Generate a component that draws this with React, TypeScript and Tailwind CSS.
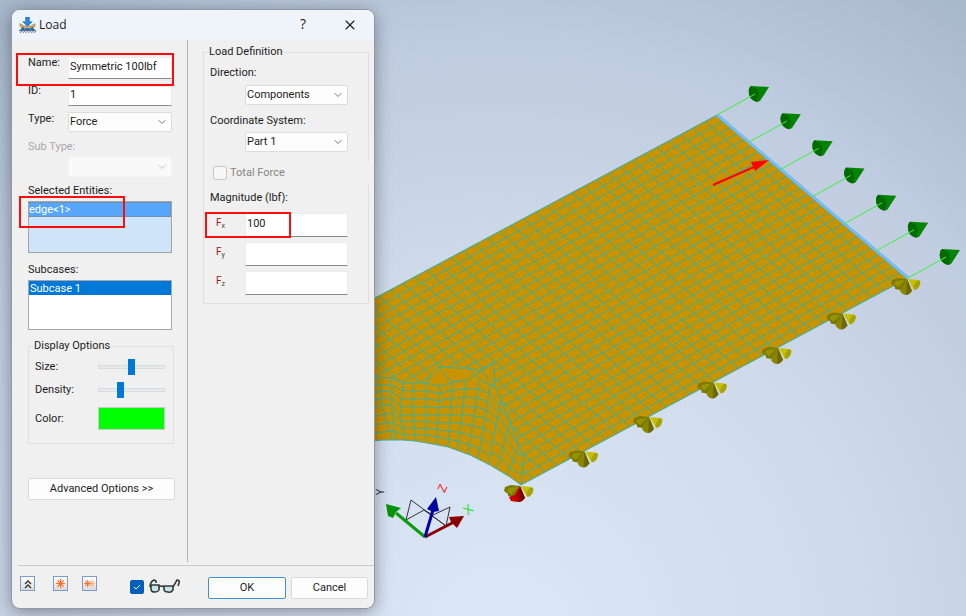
import { useState } from "react";
import type { ReactNode } from "react";
import { ChevronDown, X } from "lucide-react";

type Point = [number, number];

const toPoints = (points: Point[]) => points.map((p) => p.join(",")).join(" ");

/* Boundary between the regular mesh and the mesh that wraps the fillet */
const SEAM: Point[] = [
  [360, 377], [391, 378], [403, 383], [426, 383], [438, 367], [455, 368], [468, 368],
  [481, 371], [493, 363], [495, 387], [502, 402], [510, 422], [519, 446], [524, 456], [521, 485],
];

const FILLET: Point[] = [
  [521, 485], [510, 477], [500, 471], [490, 465], [480, 460], [470, 455], [459, 451], [448, 447],
  [438, 445], [427, 443], [415, 441], [403, 440], [383, 440], [360, 442],
];

/* Fillet mesh columns, each running from the seam down to the fillet edge */
const COLUMNS: Point[][] = [
  [[366, 378], [368, 410], [374, 441]],
  [[379, 378], [382, 405], [392, 440]],
  [[391, 378], [391, 405], [396, 440]],
  [[403, 382], [400, 415], [405, 441]],
  [[413, 383], [413, 415], [415, 441]],
  [[426, 383], [426, 415], [426, 442]],
  [[440, 386], [438, 415], [437, 444]],
  [[452, 382], [450, 415], [448, 447]],
  [[466, 381], [462, 414], [458, 451]],
  [[480, 380], [474, 416], [468, 455]],
  [[490, 385], [485, 418], [478, 459]],
  [[501, 400], [496, 425], [488, 465]],
];

const onColumn = (column: Point[], t: number): Point => {
  const [a, b, c] = column;
  const [from, to, s] = t < 0.5 ? [a, b, t * 2] : [b, c, t * 2 - 1];
  return [from[0] + (to[0] - from[0]) * s, from[1] + (to[1] - from[1]) * s];
};

const TRANSITION: Point[][] = [
  [[426, 383], [440, 386], [458, 381]],
  [[438, 367], [452, 382]],
  [[468, 368], [480, 380], [490, 385], [495, 387]],
  [[481, 371], [466, 381], [452, 382]],
  [[481, 371], [495, 387]],
  [[510, 422], [503, 447], [497, 469]],
  [[519, 446], [512, 463], [506, 475]],
  [[500, 408], [510, 422]],
  [[498, 417], [508, 430], [519, 446]],
  [[496, 426], [506, 438], [516, 453], [524, 456]],
  [[493, 440], [503, 447], [513, 461], [523, 466]],
  [[491, 452], [500, 458], [510, 468], [522, 475]],
];

const range = (n: number) => Array.from({ length: n }, (_, i) => i);

function Mesh() {
  return (
    <g>
      <defs>
        <clipPath id="regular">
          <polygon points={toPoints([[360, 306], [717, 115], [908, 278], [521, 485], ...[...SEAM].reverse()])} />
        </clipPath>
      </defs>
      <polygon
        points={toPoints([[360, 306], [717, 115], [908, 278], ...FILLET])}
        fill="#c79300"
        stroke="#43ada0"
      />
      <g stroke="#39b0a2" strokeWidth="1" fill="none">
        <g clipPath="url(#regular)">
          {range(28).map((i) => {
            const x = 717 + (191 * i) / 27;
            const y = 115 + (163 * i) / 27;
            return <line key={i} x1={x} y1={y} x2={x - 580.5} y2={y + 310.5} />;
          })}
          {range(46).map((i) => {
            const x = 717 - (387 * i) / 32;
            const y = 115 + (207 * i) / 32;
            return <line key={i} x1={x} y1={y} x2={x + 191} y2={y + 163} />;
          })}
        </g>
        <polyline points={toPoints(SEAM)} />
        {COLUMNS.map((column, i) => (
          <polyline key={i} points={toPoints(column)} />
        ))}
        {range(7).map((i) => (
          <polyline key={i} points={toPoints(COLUMNS.map((c) => onColumn(c, (i + 1) / 8)))} />
        ))}
        {TRANSITION.map((line, i) => (
          <polyline key={i} points={toPoints(line)} />
        ))}
      </g>
      <line x1="717" y1="115" x2="908" y2="278" stroke="#5db4f5" strokeWidth="3" />
      <line x1="717" y1="115" x2="908" y2="278" stroke="#8fccf8" />
    </g>
  );
}

function ForceArrow({ x, y }: { x: number; y: number }) {
  return (
    <g transform={`translate(${x} ${y})`}>
      <path d="M52-28 34-29Q31-27 32-21 33-15 40-13L43-14Z" fill="#048404" />
      <path d="M34-29Q31-27 32-21 33-15 40-13L42-20 40-26Z" fill="#036a03" />
      <path d="M0 0 38-21" stroke="#3cf03c" fill="none" />
    </g>
  );
}

function Constraint({ x, y, pinned }: { x: number; y: number; pinned?: boolean }) {
  return (
    <g transform={`translate(${x} ${y})`}>
      <path d="M0 1-9 0-15 2-16 6-12 9-12 11-7 12-3 10Z" fill="#7d7a00" />
      <path d="M-2 2-11 3-13 6-9 9Z" fill="#989400" />
      <path d="M1 1 11 2 13 5 12 9 7 12Z" fill="#c5c000" />
      <ellipse cx="10" cy="7" rx="2.5" ry="5" transform="rotate(28 10 7)" fill="#a8a300" />
      <path d="M0 1-7 13Q-3 19 2 16L5 13Z" fill={pinned ? "#b80000" : "#8a8600"} />
      <path d="M0 1-1 17 2 16 5 13Z" fill={pinned ? "#7c0000" : "#6d6900"} />
      {pinned && <path d="M-11 12-6 10-3 17-9 16Z" fill="#d00000" />}
    </g>
  );
}

function Triad() {
  return (
    <g>
      <path
        d="M406 520 411 500 446 526 450 507 433 515M406 520 424 510 446 526M424 510 433 515"
        stroke="#333"
        fill="none"
      />
      <path d="M425 537 396 513" stroke="#0a9c0a" strokeWidth="3" />
      <path d="M386 504 401 508 396 512 393 518 388 516Z" fill="#079307" />
      <path d="M425 537 454 522" stroke="#8b0000" strokeWidth="3" />
      <path d="M464 516 449 517 451 522 457 528Z" fill="#8b0000" />
      <path d="M425 537 433 510" stroke="#0000a8" strokeWidth="3" />
      <path d="M436 497 427 509 433 512 439 511Z" fill="#0000a0" />
      <g fontFamily="'Liberation Sans', Arial, sans-serif" textAnchor="middle">
        <text transform="translate(384 492) rotate(-90)" fontSize="10" fill="#222">Y</text>
        <text transform="translate(446 490) rotate(-65)" fontSize="12" fill="#f22">Z</text>
        <text transform="translate(471 513) rotate(-40)" fontSize="13" fill="#2be02b">X</text>
      </g>
    </g>
  );
}

function Viewport() {
  return (
    <svg
      className="absolute inset-0 h-full w-full"
      viewBox="0 0 966 616"
      preserveAspectRatio="xMinYMin slice"
      aria-label="Model view"
    >
      <defs>
        <radialGradient id="sky" gradientUnits="userSpaceOnUse" cx="500" cy="640" r="800">
          <stop offset="0" stopColor="#dce7f7" />
          <stop offset="0.45" stopColor="#cfdaea" />
          <stop offset="0.74" stopColor="#c0ccdf" />
          <stop offset="1" stopColor="#a6b6cb" />
        </radialGradient>
      </defs>
      <rect width="966" height="616" fill="url(#sky)" />
      <Mesh />
      {range(7).map((i) => (
        <ForceArrow key={i} x={717 + (191 * i) / 6} y={115 + (163 * i) / 6} />
      ))}
      {range(7).map((i) => (
        <Constraint key={i} x={907 - (387 * i) / 6} y={278 + (207 * i) / 6} pinned={i === 6} />
      ))}
      <path d="M713 185 754 167" stroke="#f00" strokeWidth="2" />
      <path d="M769 160 751 162 755 171Z" fill="#f00" />
      <Triad />
    </svg>
  );
}

function Highlight({ className }: { className: string }) {
  return <div className={`pointer-events-none absolute border-2 border-[#fb0d0d] ${className}`} />;
}

function TextBox({ id, value, className }: { id: string; value?: string; className: string }) {
  return (
    <input
      id={id}
      defaultValue={value}
      className={`block w-full border border-[#ececec] border-b-[#8a8a8a] bg-white px-px outline-none ${className}`}
    />
  );
}

function DropDown({ id, value, disabled }: { id: string; value: string; disabled?: boolean }) {
  return (
    <div className="relative">
      <select
        id={id}
        disabled={disabled}
        className="block h-5 w-full appearance-none rounded-xs border border-[#dcdcdc] bg-[#fdfdfd] px-px outline-none disabled:border-[#f5f5f5] disabled:bg-[#f9f9f9]"
      >
        <option>{value}</option>
      </select>
      <ChevronDown
        strokeWidth={2}
        className={`pointer-events-none absolute top-1 right-1 size-3 ${disabled ? "text-[#c4c4c4]" : "text-[#777]"}`}
      />
    </div>
  );
}

function Slider({ id, value }: { id: string; value: number }) {
  return (
    <input
      id={id}
      type="range"
      defaultValue={value}
      className="h-4 w-[67px] appearance-none bg-transparent [&::-webkit-slider-runnable-track]:h-1 [&::-webkit-slider-runnable-track]:border [&::-webkit-slider-runnable-track]:border-[#d9dcdc] [&::-webkit-slider-runnable-track]:bg-[#e7eaea] [&::-webkit-slider-thumb]:-mt-[7px] [&::-webkit-slider-thumb]:h-4 [&::-webkit-slider-thumb]:w-[7px] [&::-webkit-slider-thumb]:appearance-none [&::-webkit-slider-thumb]:bg-[#0078d7]"
    />
  );
}

function ListBox({ label, className, children }: { label: string; className: string; children: ReactNode }) {
  return (
    <ul role="listbox" aria-label={label} className={`border border-[#a3a7ad] ${className}`}>
      {children}
    </ul>
  );
}

function ToolButton({ label, children }: { label: string; children: ReactNode }) {
  return (
    <button
      aria-label={label}
      className="grid size-[15px] place-items-center border border-[#7c9bd3] bg-linear-to-b from-white to-[#dcdad5]"
    >
      {children}
    </button>
  );
}

const STAR = "M5 0V10M0 5H10M1.5 1.5 8.5 8.5M8.5 1.5 1.5 8.5";

function LoadIcon() {
  return (
    <svg viewBox="0 0 18 18" className="size-[17px]" aria-hidden="true">
      <path d="M1 7Q9 13 17 7V10Q9 15 1 10Z" fill="#d9ad62" stroke="#8c6a35" strokeWidth=".5" />
      <path d="M1 14 4 10 7 14ZM11 14 14 10 17 14ZM6 14H12V12H6Z" fill="#1d68b8" />
      <path d="M7 0H11V5H14L9 10 4 5H7Z" fill="#2d86dc" stroke="#1761aa" strokeWidth=".6" />
      <path d="M0 14.5H18" stroke="#3e5266" />
      <path d="M1 17 3 15M4 17 6 15M7 17 9 15M10 17 12 15M13 17 15 15M16 17 18 15" stroke="#5d7185" />
    </svg>
  );
}

function GlassesIcon() {
  return (
    <svg viewBox="0 0 31 16" className="h-4 w-[31px]" fill="none" stroke="#333a3a" strokeWidth="1.6" aria-hidden="true">
      <path d="M2 6H10V11Q9 13 6 13 2 13 2 10ZM15 7H24V11Q22 14 19 13 15 13 15 10Z" fill="#c5e3e8" />
      <path d="M10 8Q12 6 15 8M1 8Q1 3 5 1L7 2V4M24 8 28 1Q31 1 30 4L29 7" />
    </svg>
  );
}

const COMPONENTS = [
  { axis: "x", value: "100" },
  { axis: "y", value: "" },
  { axis: "z", value: "" },
];

function Properties() {
  return (
    <section className="border-r border-[#b4b4b4] pt-[9px] pr-3 pl-4">
      <div className="relative grid grid-cols-[40px_1fr]">
        <div className="flex flex-col leading-7 whitespace-nowrap">
          <label htmlFor="name">Name:</label>
          <label htmlFor="id">ID:</label>
          <label htmlFor="type">Type:</label>
          <label htmlFor="subtype" className="text-[#a9a9a9]">Sub Type:</label>
        </div>
        <div className="pt-2 pr-[3px]">
          <TextBox id="name" value="Symmetric 100lbf" className="h-[22px] pb-1" />
          <div className="h-[7px]" />
          <TextBox id="id" value="1" className="h-5 pb-1" />
          <div className="h-[6px]" />
          <DropDown id="type" value="Force" />
          <div className="h-[25px]" />
          <DropDown id="subtype" value="" disabled />
        </div>
        <Highlight className="top-1 right-[1px] -left-3 h-[33px]" />
      </div>

      <div className="relative mt-1 pr-[3px]">
        <h2 className="leading-5">Selected Entities:</h2>
        <ListBox label="Selected Entities" className="h-[52px] bg-[#cee4f8]">
          <li role="option" aria-selected="true" className="h-[15px] border border-l-0 border-dotted border-[#8a7a60] bg-[#56a6fb] leading-[14px] text-white">
            edge&lt;1&gt;
          </li>
        </ListBox>
        <Highlight className="top-[15px] -left-[9px] h-8 w-[106px]" />
      </div>

      <div className="mt-[7px] pr-[3px]">
        <h2 className="leading-5">Subcases:</h2>
        <ListBox label="Subcases" className="h-[50px] bg-white">
          <li role="option" aria-selected="true" className="h-[14px] bg-[#0078d7] pl-px leading-[16px] text-white">
            Subcase 1
          </li>
        </ListBox>
      </div>

      <fieldset className="mt-2 mr-[1px] border border-[#dfdfdf] pr-2 pb-[13px] pl-[6px]">
        <legend className="-ml-[2px] px-px leading-4">Display Options</legend>
        <div className="flex items-center justify-between pt-[5px] leading-4">
          <label htmlFor="size">Size:</label>
          <Slider id="size" value={50} />
        </div>
        <div className="flex items-center justify-between pt-[7px] leading-4">
          <label htmlFor="density">Density:</label>
          <Slider id="density" value={31} />
        </div>
        <div className="flex items-center justify-between pt-[9px] leading-4">
          <span>Color:</span>
          <button aria-label="Color" className="h-[23px] w-[67px] border border-[#c9c9c9] bg-[#00ff00]" />
        </div>
      </fieldset>

      <button className="mt-[34px] block h-[22px] w-full rounded-xs border border-[#dadada] bg-[#fdfdfd]">
        Advanced Options &gt;&gt;
      </button>
    </section>
  );
}

function Definition() {
  return (
    <section className="pt-1 pr-[5px] pl-[15px]">
      <fieldset className="border border-[#dfdfdf] pb-2 pl-[6px]">
        <legend className="-ml-[2px] px-px leading-4">Load Definition</legend>
        <label htmlFor="direction" className="block pt-[5px] leading-4">Direction:</label>
        <div className="mt-1 mr-5 ml-[35px]">
          <DropDown id="direction" value="Components" />
        </div>
        <label htmlFor="system" className="mt-2 block leading-4">Coordinate System:</label>
        <div className="mt-[3px] mr-5 ml-[35px]">
          <DropDown id="system" value="Part 1" />
        </div>
        <label className="mt-[9px] -mr-px flex h-6 items-center gap-[3px] bg-[#f0f0f0] pl-[3px] text-[#858585]">
          <input type="checkbox" disabled className="size-[14px] appearance-none rounded-xs border border-[#c8c8c8] bg-[#f7f7f7]" />
          Total Force
        </label>
        <h2 className="mt-[5px] leading-4">Magnitude (lbf):</h2>
        <div className="relative mt-[7px] flex flex-col gap-[5px]">
          {COMPONENTS.map(({ axis, value }) => (
            <div key={axis} className="grid grid-cols-[35px_1fr] pr-5">
              <label htmlFor={axis} className="pl-[6px] text-[10px] leading-5 text-[#a31515]">
                F<sub className="text-[7px] text-[#444]">{axis}</sub>
              </label>
              <TextBox id={axis} value={value} className="h-6 pb-1" />
            </div>
          ))}
          <Highlight className="-top-px -left-[5px] h-[26px] w-[86px]" />
        </div>
      </fieldset>
    </section>
  );
}

function Footer() {
  const [preview, setPreview] = useState(true);
  return (
    <footer className="ml-[6px] flex h-[43px] items-start border-t border-[#c9c9c9] pt-[10px] pr-[6px]">
      <div className="flex pl-[2px]">
        <ToolButton label="Collapse">
          <svg viewBox="0 0 10 10" className="size-[10px]" fill="none" stroke="#333" strokeWidth="1.3">
            <path d="M2 5 5 2 8 5M2 9 5 6 8 9" />
          </svg>
        </ToolButton>
        <div className="ml-[18px] flex gap-[14px]">
          <ToolButton label="Show load">
            <svg viewBox="0 0 10 10" className="size-[9px]" stroke="#ff6a1f" strokeWidth="1.3">
              <path d={STAR} />
            </svg>
          </ToolButton>
          <ToolButton label="Show all loads">
            <svg viewBox="0 0 16 10" className="h-[7px] w-[11px]" strokeWidth="1.3">
              <path d={STAR} stroke="#ffb070" transform="translate(6 0)" />
              <path d={STAR} stroke="#ff6a1f" />
            </svg>
          </ToolButton>
        </div>
      </div>
      <label className="ml-[33px] flex items-center gap-[5px] pt-[3px]">
        <span className="relative block size-[14px]">
          <input
            type="checkbox"
            aria-label="Preview"
            checked={preview}
            onChange={() => setPreview(!preview)}
            className="block size-[14px] appearance-none rounded-xs border border-[#005fb8] checked:bg-[#005fb8]"
          />
          <svg viewBox="0 0 14 14" className="pointer-events-none absolute inset-0" fill="none" stroke="#fff">
            <path d="M4 7 6 9 10 5" />
          </svg>
        </span>
        <GlassesIcon />
      </label>
      <div className="ml-auto flex gap-[5px] pt-px">
        <button className="h-[22px] w-[78px] rounded-xs border border-[#3f92d8] bg-[#fdfdfd]">OK</button>
        <button className="h-[22px] w-[77px] rounded-xs border border-[#dadada] bg-[#fdfdfd]">Cancel</button>
      </div>
    </footer>
  );
}

export default function App() {
  return (
    <main className="relative min-h-screen overflow-hidden bg-[#c0ccdf] pt-[10px] pb-2 pl-3 font-[Roboto,sans-serif] text-[11px] text-[#1c1c1c]">
      <Viewport />
      <div
        role="dialog"
        aria-labelledby="title"
        className="relative w-[362px] overflow-hidden rounded-lg bg-[#f0f0f0] shadow-[0_0_0_1px_#8f99a8,0_3px_18px_#0006]"
      >
        <header className="flex h-[30px] items-center bg-[#eff4fa] pl-[7px]">
          <LoadIcon />
          <h1 id="title" className="pl-[3px] font-['Open_Sans',sans-serif] text-[12px]">Load</h1>
          <div className="ml-auto flex items-center gap-9 pr-4">
            <button aria-label="Help" className="pb-1 font-['Open_Sans',sans-serif] text-[14px]">?</button>
            <button aria-label="Close">
              <X className="size-4" strokeWidth={1.6} />
            </button>
          </div>
        </header>
        <div className="grid grid-cols-[176px_1fr] pb-[3px]">
          <Properties />
          <Definition />
          <div className="h-[62px] border-r border-[#b4b4b4]" />
        </div>
        <Footer />
      </div>
    </main>
  );
}
